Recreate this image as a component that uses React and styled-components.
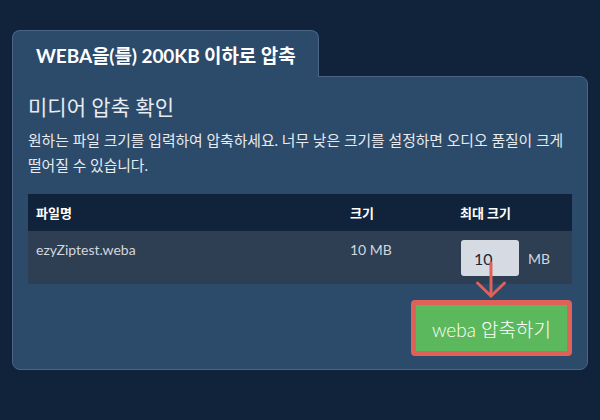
import React from "react";
import styled, { createGlobalStyle } from "styled-components";

const Global = createGlobalStyle`
  html, body { margin: 0; padding: 0; background: #10233a; }
  body { font-family: Lato, "Noto Sans CJK KR", sans-serif; }
  * { box-sizing: border-box; }
`;

const Page = styled.div`
  width: 600px;
  height: 420px;
  padding: 30px 12px 0 12px;
  background: #10233a;
`;

const Tab = styled.div`
  position: relative;
  z-index: 1;
  width: 307px;
  height: 47px;
  margin-bottom: -1px;
  padding: 0 0 0 23px;
  display: flex;
  align-items: center;
  background: #2c4a6a;
  border: 1px solid #4a6686;
  border-bottom: none;
  border-radius: 8px 8px 0 0;
  color: #ffffff;
  font-size: 19px;
  font-weight: 700;
  letter-spacing: -0.1px;
`;

const Panel = styled.div`
  width: 576px;
  height: 294px;
  background: #2c4a6a;
  border: 1px solid #4a6686;
  border-radius: 0 8px 8px 8px;
  padding: 16px 15px;
  display: flex;
  flex-direction: column;
`;

const Heading = styled.h2`
  margin: 0;
  font-size: 21px;
  font-weight: 400;
  line-height: 28px;
  color: #e8ebef;
`;

const Desc = styled.p`
  margin: 7px 0 0 0;
  font-size: 14.8px;
  line-height: 25px;
  color: #e8ebef;
`;

const Table = styled.div`
  margin-top: 16px;
  width: 544px;
`;

const HeadRow = styled.div`
  display: grid;
  grid-template-columns: 314px 110px 1fr;
  height: 37px;
  align-items: center;
  background: #10233a;
  color: #ffffff;
  font-size: 13px;
  font-weight: 700;
`;

const BodyRow = styled.div`
  display: grid;
  grid-template-columns: 314px 110px 1fr;
  height: 53px;
  background: #2e3e53;
  color: #d2d7de;
  font-size: 14px;
`;

const Cell = styled.div`
  padding: ${(p) => (p.$body ? "10px 0 0 8px" : "0 0 0 8px")};
  line-height: 18px;
`;

const SizeCell = styled.div`
  position: relative;
  display: flex;
  align-items: center;
  gap: 9px;
  padding: 9px 0 0 9px;
  align-self: start;
`;

const SizeInput = styled.div`
  width: 58px;
  height: 36px;
  border-radius: 3px;
  background: #d6dbe3;
  color: #1d2632;
  font-size: 16px;
  padding-left: 13px;
  display: flex;
  align-items: center;
`;

const Unit = styled.span`
  color: #d2d7de;
  font-size: 14px;
`;

const Arrow = styled.svg`
  position: absolute;
  left: 29px;
  top: 32px;
  overflow: visible;
  z-index: 2;
`;

const Actions = styled.div`
  display: flex;
  justify-content: flex-end;
  width: 544px;
  margin-top: 16px;
`;

const Button = styled.button`
  width: 161px;
  height: 56px;
  border: 5px solid #e0605a;
  border-radius: 4px;
  background: #5cb85c;
  color: #ffffff;
  font-family: Lato, "Noto Sans CJK KR", sans-serif;
  font-size: 19px;
  font-weight: 300;
  padding: 0;
  cursor: pointer;
`;

export default function App() {
  return (
    <>
      <Global />
      <Page>
        <Tab>WEBA을(를) 200KB 이하로 압축</Tab>
        <Panel>
          <Heading>미디어 압축 확인</Heading>
          <Desc>
            원하는 파일 크기를 입력하여 압축하세요. 너무 낮은 크기를 설정하면 오디오 품질이 크게
            떨어질 수 있습니다.
          </Desc>
          <Table>
            <HeadRow>
              <Cell>파일명</Cell>
              <Cell>크기</Cell>
              <Cell>최대 크기</Cell>
            </HeadRow>
            <BodyRow>
              <Cell $body>ezyZiptest.weba</Cell>
              <Cell $body>10 MB</Cell>
              <SizeCell>
                <SizeInput>10</SizeInput>
                <Unit>MB</Unit>
                <Arrow width="30" height="40" viewBox="0 0 30 40">
                  <g stroke="#e0605a" strokeWidth="3" fill="none" strokeLinecap="round" strokeLinejoin="round">
                    <line x1="10" y1="0" x2="10" y2="33" />
                    <polyline points="-3.5,20 10,33 23.5,20" />
                  </g>
                </Arrow>
              </SizeCell>
            </BodyRow>
          </Table>
          <Actions>
            <Button>weba 압축하기</Button>
          </Actions>
        </Panel>
      </Page>
    </>
  );
}
